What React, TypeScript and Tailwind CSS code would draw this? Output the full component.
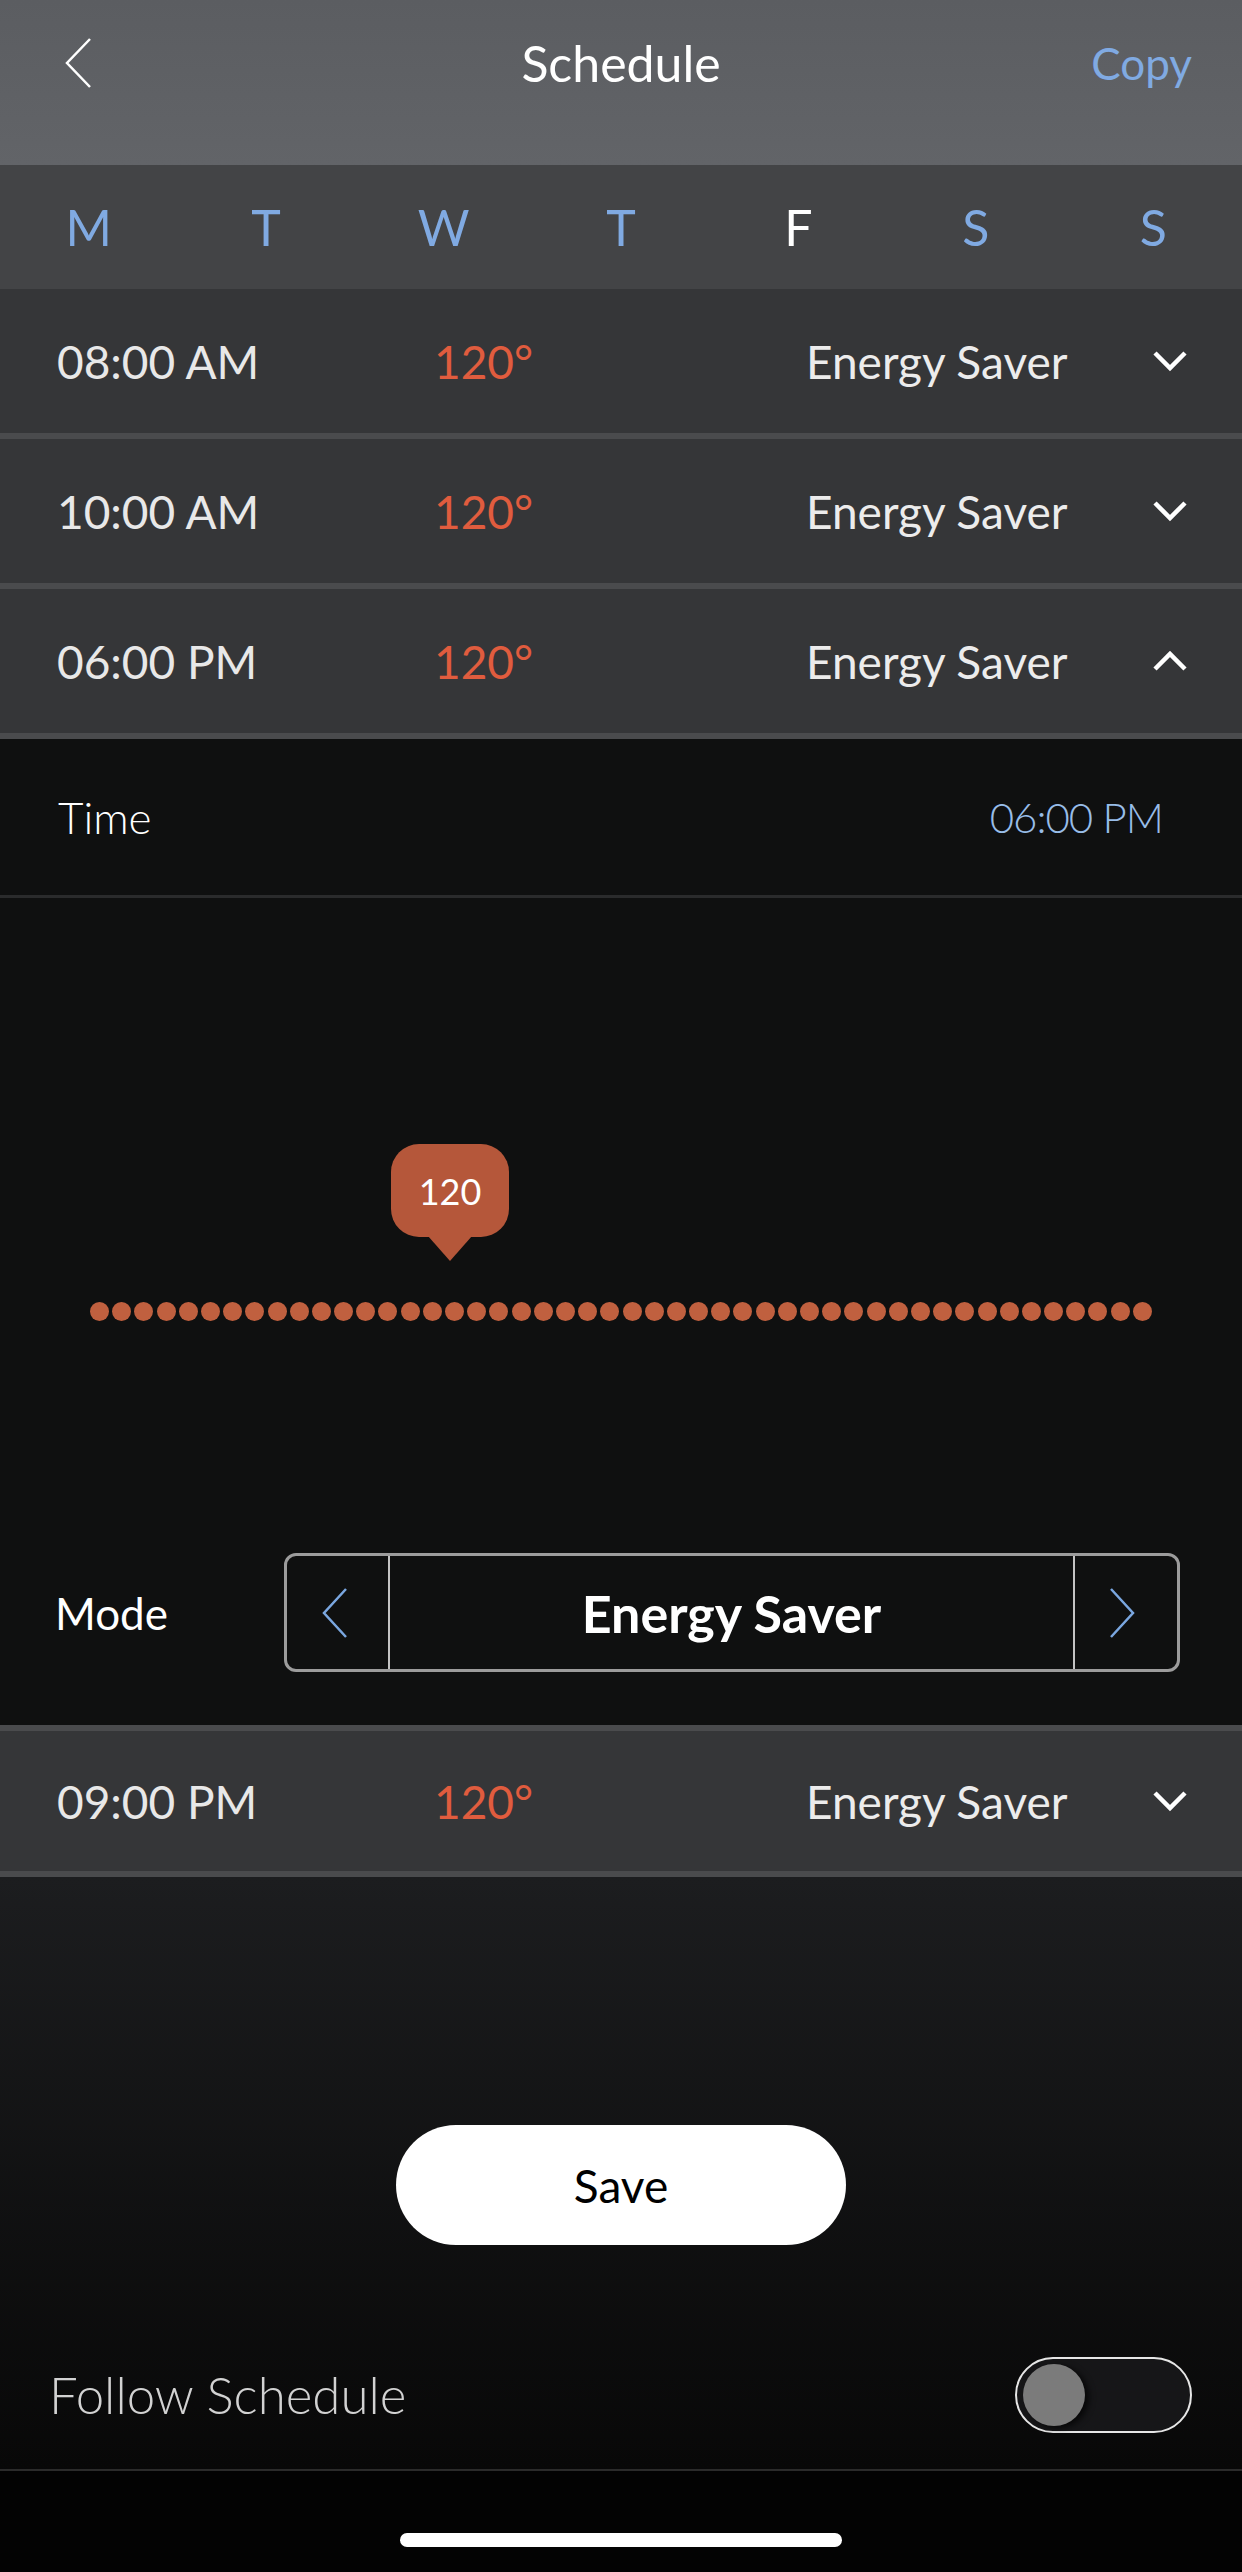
import React from 'react';

const DAYS = [
  { label: 'M', active: false },
  { label: 'T', active: false },
  { label: 'W', active: false },
  { label: 'T', active: false },
  { label: 'F', active: true },
  { label: 'S', active: false },
  { label: 'S', active: false },
];

function Chevron({ up = false }: { up?: boolean }) {
  return (
    <svg width="36" height="22" viewBox="0 0 36 22" fill="none">
      <polyline
        points={up ? '3,19 18,4 33,19' : '3,3 18,18 33,3'}
        stroke="#ffffff"
        strokeWidth="4.5"
        strokeLinejoin="miter"
      />
    </svg>
  );
}

function ScheduleRow({ time, open = false, short = false }: { time: string; open?: boolean; short?: boolean }) {
  return (
    <div
      className={
        'flex items-center bg-[#353638] pl-[57px] pr-[54px] text-[46px] text-[#e8e8e8] ' +
        (short ? 'h-[140px]' : 'h-[144px]')
      }
    >
      <span className="w-[377px]">{time}</span>
      <span className="w-[372px] text-[#e05c3e]">120°</span>
      <span className="flex-1 text-[#ececec]">Energy Saver</span>
      <Chevron up={open} />
    </div>
  );
}

export default function App() {
  const dots = Array.from({ length: 48 }, (_, i) => i);

  return (
    <div className="min-h-[2572px] w-[1242px] bg-black font-['Lato',sans-serif]">
      {/* Header */}
      <header className="h-[165px] bg-gradient-to-b from-[#5b5d61] to-[#626468]">
        <div className="flex h-[126px] items-center px-[50px]">
          <div className="w-[160px] pl-[14px]">
            <svg width="28" height="52" viewBox="0 0 28 52" fill="none">
              <polyline points="26,2 3,26 26,50" stroke="#ffffff" strokeWidth="2.5" />
            </svg>
          </div>
          <h1 className="flex-1 text-center text-[50px] text-white">Schedule</h1>
          <div className="w-[160px] text-right text-[44px] text-[#80aae2]">Copy</div>
        </div>
      </header>

      {/* Days */}
      <div className="grid h-[124px] grid-cols-7 items-center bg-[#434446]">
        {DAYS.map((d, i) => (
          <span
            key={i}
            className={'text-center text-[50px] ' + (d.active ? 'text-white' : 'text-[#80aae2]')}
          >
            {d.label}
          </span>
        ))}
      </div>

      {/* Rows */}
      <div className="border-b-[6px] border-[#4a4b4d]">
        <ScheduleRow time="08:00 AM" />
      </div>
      <div className="border-b-[6px] border-[#4a4b4d]">
        <ScheduleRow time="10:00 AM" />
      </div>
      <div className="border-b-[6px] border-[#4a4b4d]">
        <ScheduleRow time="06:00 PM" open />
      </div>

      {/* Expanded editor */}
      <section className="bg-[#0f1010]">
        <div className="flex h-[159px] items-center justify-between border-b-[3px] border-[#2a2b2c] pl-[58px] pr-[79px] text-[44px] font-light">
          <span className="text-white">Time</span>
          <span className="tracking-[-1px] text-[42px] text-[#98bde8]">06:00 PM</span>
        </div>

        <div className="pt-[246px]">
          <div className="ml-[391px] flex w-[118px] flex-col items-center">
            <div className="flex h-[93px] w-[118px] items-center justify-center rounded-[28px] bg-[#b5573a] text-[36px] text-white">
              120
            </div>
            <svg width="44" height="25" viewBox="0 0 44 25" className="-mt-px">
              <polygon points="0,0 44,0 22,25" fill="#b5573a" />
            </svg>
          </div>

          <div className="ml-[90px] mt-[41px] flex w-[1062px] justify-between">
            {dots.map((i) => (
              <span key={i} className="h-[19px] w-[19px] rounded-full bg-[#c0603f]" />
            ))}
          </div>
        </div>

        <div className="flex items-center pb-[53px] pt-[232px]">
          <span className="w-[284px] pl-[55px] text-[44px] text-white">Mode</span>
          <div className="flex h-[119px] w-[896px] rounded-[12px] border-[3px] border-[#9c9c9c]">
            <div className="flex w-[103px] items-center justify-center border-r-2 border-[#c4c4c4] pr-[6px]">
              <svg width="26" height="52" viewBox="0 0 26 52" fill="none">
                <polyline points="24,2 2,26 24,50" stroke="#7aa7e0" strokeWidth="2.5" />
              </svg>
            </div>
            <div className="flex flex-1 items-center justify-center text-[52px] font-bold text-white">
              Energy Saver
            </div>
            <div className="flex w-[104px] items-center justify-center border-l-2 border-[#c4c4c4] pr-[8px]">
              <svg width="26" height="52" viewBox="0 0 26 52" fill="none">
                <polyline points="2,2 24,26 2,50" stroke="#7aa7e0" strokeWidth="2.5" />
              </svg>
            </div>
          </div>
        </div>
      </section>

      <div className="border-y-[6px] border-[#4a4b4d]">
        <ScheduleRow time="09:00 PM" short />
      </div>

      {/* Footer actions */}
      <div className="bg-gradient-to-b from-[#1c1d1f] to-[#080808] pt-[248px]">
        <button className="mx-auto flex h-[120px] w-[450px] items-center justify-center rounded-full bg-white text-[46px] text-black">
          Save
        </button>
        <div className="mt-[76px] flex h-[148px] items-center justify-between pl-[49px] pr-[50px]">
          <span className="text-[51px] font-light text-[#d2d2d2]">Follow Schedule</span>
          <div className="flex h-[76px] w-[177px] items-center rounded-full border-2 border-[#e6e6e6] bg-[#161618] pl-[6px]">
            <span className="h-[62px] w-[62px] rounded-full bg-[#7b7b7b] shadow-[4px_2px_6px_rgba(0,0,0,0.7)]" />
          </div>
        </div>
      </div>

      <div className="h-[104px] border-t-2 border-[#2b2b2b] bg-[#030303] pt-[62px]">
        <div className="mx-auto h-[14px] w-[442px] rounded-full bg-white" />
      </div>
    </div>
  );
}
